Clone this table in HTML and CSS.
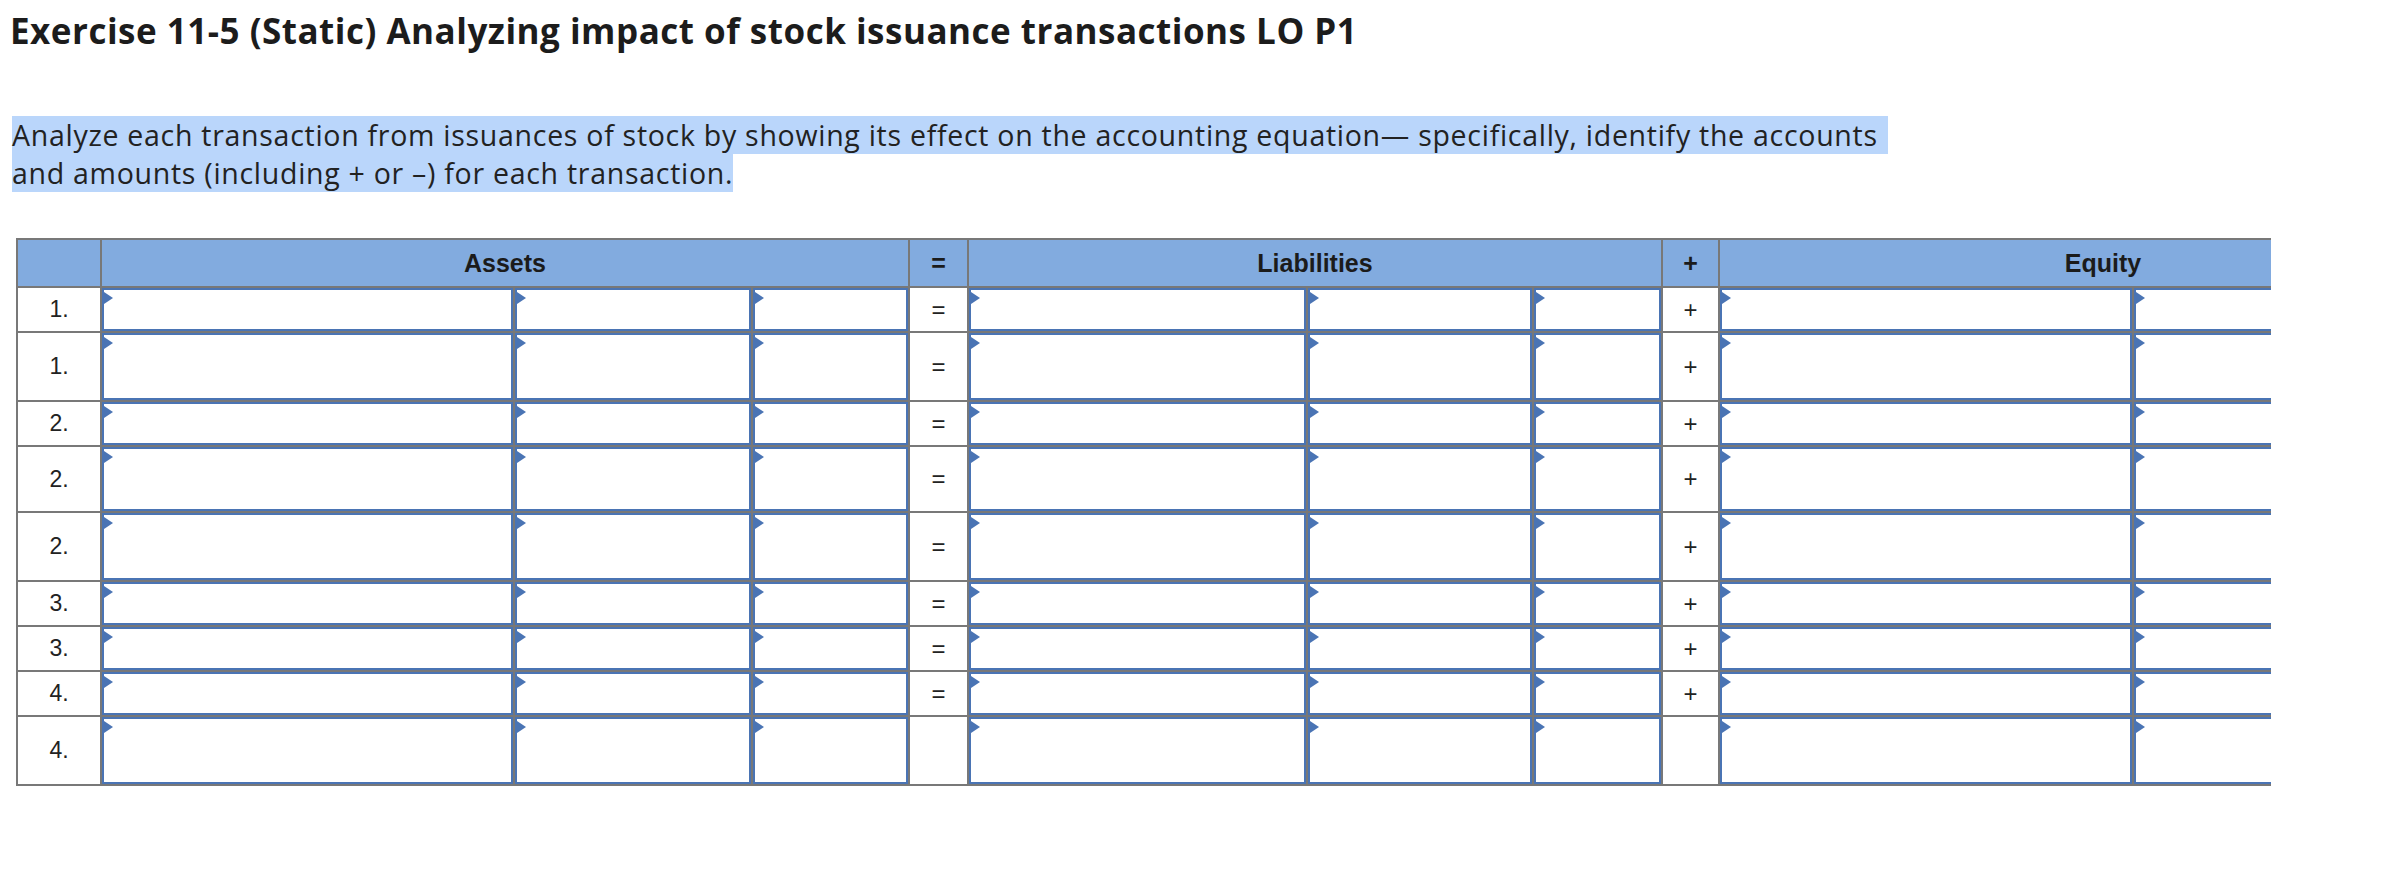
FILE: index.html
```html
<!DOCTYPE html>
<html lang="en">
<head>
<meta charset="utf-8">
<title>Exercise 11-5 (Static)</title>
<link rel="stylesheet" href="styles.css">
</head>
<body>
<main class="page">
  <h1 class="title">Exercise 11-5 (Static) Analyzing impact of stock issuance transactions LO P1</h1>
  <p class="intro"><span class="hl hl-first">Analyze each transaction from issuances of stock by showing its effect on the accounting equation— specifically, identify the accounts </span><span class="hl">and amounts (including + or –) for each transaction.</span></p>

  <div class="sheet-clip">
    <div class="sheet" role="table">
      <div class="c head" role="columnheader"></div>
      <div class="c head span3" role="columnheader">Assets</div>
      <div class="c head sym" role="columnheader">=</div>
      <div class="c head span3" role="columnheader">Liabilities</div>
      <div class="c head sym" role="columnheader">+</div>
      <div class="c head span3 equity" role="columnheader">Equity</div>

      <!-- row 1 -->
      <div class="c num">1.</div>
      <div class="c"><div class="field"></div></div><div class="c"><div class="field"></div></div><div class="c"><div class="field"></div></div>
      <div class="c op">=</div>
      <div class="c"><div class="field"></div></div><div class="c"><div class="field"></div></div><div class="c"><div class="field"></div></div>
      <div class="c op">+</div>
      <div class="c"><div class="field"></div></div><div class="c"><div class="field"></div></div><div class="c"><div class="field"></div></div>

      <!-- row 2 -->
      <div class="c num">1.</div>
      <div class="c"><div class="field"></div></div><div class="c"><div class="field"></div></div><div class="c"><div class="field"></div></div>
      <div class="c op">=</div>
      <div class="c"><div class="field"></div></div><div class="c"><div class="field"></div></div><div class="c"><div class="field"></div></div>
      <div class="c op">+</div>
      <div class="c"><div class="field"></div></div><div class="c"><div class="field"></div></div><div class="c"><div class="field"></div></div>

      <!-- row 3 -->
      <div class="c num">2.</div>
      <div class="c"><div class="field"></div></div><div class="c"><div class="field"></div></div><div class="c"><div class="field"></div></div>
      <div class="c op">=</div>
      <div class="c"><div class="field"></div></div><div class="c"><div class="field"></div></div><div class="c"><div class="field"></div></div>
      <div class="c op">+</div>
      <div class="c"><div class="field"></div></div><div class="c"><div class="field"></div></div><div class="c"><div class="field"></div></div>

      <!-- row 4 -->
      <div class="c num">2.</div>
      <div class="c"><div class="field"></div></div><div class="c"><div class="field"></div></div><div class="c"><div class="field"></div></div>
      <div class="c op">=</div>
      <div class="c"><div class="field"></div></div><div class="c"><div class="field"></div></div><div class="c"><div class="field"></div></div>
      <div class="c op">+</div>
      <div class="c"><div class="field"></div></div><div class="c"><div class="field"></div></div><div class="c"><div class="field"></div></div>

      <!-- row 5 -->
      <div class="c num">2.</div>
      <div class="c"><div class="field"></div></div><div class="c"><div class="field"></div></div><div class="c"><div class="field"></div></div>
      <div class="c op">=</div>
      <div class="c"><div class="field"></div></div><div class="c"><div class="field"></div></div><div class="c"><div class="field"></div></div>
      <div class="c op">+</div>
      <div class="c"><div class="field"></div></div><div class="c"><div class="field"></div></div><div class="c"><div class="field"></div></div>

      <!-- row 6 -->
      <div class="c num">3.</div>
      <div class="c"><div class="field"></div></div><div class="c"><div class="field"></div></div><div class="c"><div class="field"></div></div>
      <div class="c op">=</div>
      <div class="c"><div class="field"></div></div><div class="c"><div class="field"></div></div><div class="c"><div class="field"></div></div>
      <div class="c op">+</div>
      <div class="c"><div class="field"></div></div><div class="c"><div class="field"></div></div><div class="c"><div class="field"></div></div>

      <!-- row 7 -->
      <div class="c num">3.</div>
      <div class="c"><div class="field"></div></div><div class="c"><div class="field"></div></div><div class="c"><div class="field"></div></div>
      <div class="c op">=</div>
      <div class="c"><div class="field"></div></div><div class="c"><div class="field"></div></div><div class="c"><div class="field"></div></div>
      <div class="c op">+</div>
      <div class="c"><div class="field"></div></div><div class="c"><div class="field"></div></div><div class="c"><div class="field"></div></div>

      <!-- row 8 -->
      <div class="c num">4.</div>
      <div class="c"><div class="field"></div></div><div class="c"><div class="field"></div></div><div class="c"><div class="field"></div></div>
      <div class="c op">=</div>
      <div class="c"><div class="field"></div></div><div class="c"><div class="field"></div></div><div class="c"><div class="field"></div></div>
      <div class="c op">+</div>
      <div class="c"><div class="field"></div></div><div class="c"><div class="field"></div></div><div class="c"><div class="field"></div></div>

      <!-- row 9 -->
      <div class="c num">4.</div>
      <div class="c"><div class="field"></div></div><div class="c"><div class="field"></div></div><div class="c"><div class="field"></div></div>
      <div class="c op"></div>
      <div class="c"><div class="field"></div></div><div class="c"><div class="field"></div></div><div class="c"><div class="field"></div></div>
      <div class="c op"></div>
      <div class="c"><div class="field"></div></div><div class="c"><div class="field"></div></div><div class="c"><div class="field"></div></div>
    </div>
  </div>
</main>
</body>
</html>
```

FILE: styles.css
```css
* { box-sizing: border-box; }

html, body {
  margin: 0;
  padding: 0;
  background: #ffffff;
}

.page {
  padding: 0 0 0 10px;
  color: #1f1f1f;
}

.title {
  margin: 0;
  padding-top: 10px;
  font-family: "Open Sans", "Lato", sans-serif;
  font-weight: 700;
  font-size: 35px;
  line-height: 42px;
  letter-spacing: 0.5px;
  color: #1c1c1c;
  white-space: nowrap;
}

.intro {
  margin: 64px 0 0 2px;
  font-family: "Open Sans", "Lato", sans-serif;
  font-size: 28.5px;
  line-height: 38px;
  letter-spacing: 0.72px;
  color: #222222;
}

.hl {
  display: block;
  width: max-content;
  height: 38px;
  background: #bad6fb;
  white-space: nowrap;
}

.hl-first {
  padding-right: 10px;
}

.sheet-clip {
  margin: 46px 0 0 6px;
  width: 2255px;
  overflow: hidden;
}

.sheet {
  display: grid;
  width: max-content;
  grid-template-columns: 84px 413px 238px 157px 59px 339px 226px 129px 57px 414px 226px 128px;
  grid-template-rows: 48px 45px 69px 45px 66px 69px 45px 45px 45px 69px;
  border-top: 2px solid #787878;
  border-left: 2px solid #787878;
  font-family: "Liberation Sans", Arial, sans-serif;
}

.c {
  border-right: 2px solid #787878;
  border-bottom: 2px solid #787878;
  background: #ffffff;
  min-width: 0;
}

.head {
  background: #82abdf;
  display: flex;
  align-items: center;
  justify-content: center;
  font-weight: 700;
  font-size: 25px;
  color: #1b1b1b;
}

.span3 {
  grid-column: span 3;
}

.sym {
  font-size: 25px;
}

.num,
.op {
  display: flex;
  align-items: center;
  justify-content: center;
  color: #222222;
}

.num {
  font-size: 23px;
}

.op {
  font-size: 24px;
}

.field {
  position: relative;
  height: 100%;
  border: 2px solid #4a74b4;
  background: #ffffff;
}

.field::before {
  content: "";
  position: absolute;
  top: 2px;
  left: 0;
  width: 9px;
  height: 12px;
  background: #4a74b4;
  clip-path: polygon(0 0, 100% 50%, 0 100%);
}
```
